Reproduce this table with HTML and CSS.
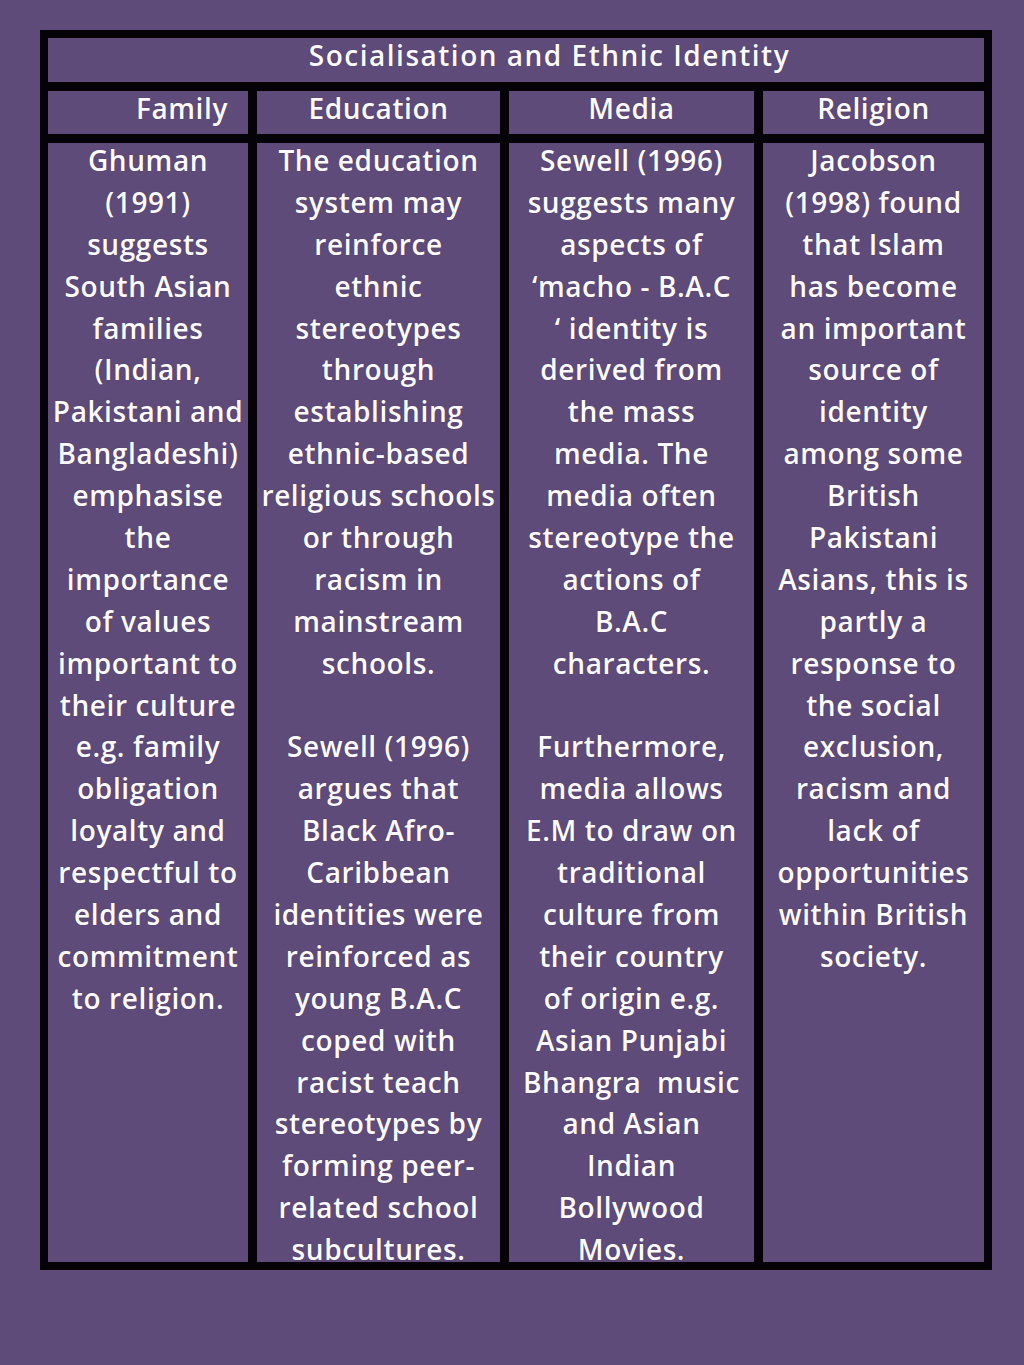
FILE: index.html
```html
<!DOCTYPE html>
<html lang="en">
<head>
<meta charset="utf-8">
<title>Socialisation and Ethnic Identity</title>
<link rel="stylesheet" href="styles.css">
</head>
<body>
<div class="table">
  <div class="title">Socialisation and Ethnic Identity</div>
  <div class="head head-family">Family</div>
  <div class="head">Education</div>
  <div class="head">Media</div>
  <div class="head">Religion</div>
  <div class="cell">
    <span>Ghuman</span><span>(1991)</span><span>suggests</span><span>South Asian</span><span>families</span><span>(Indian,</span><span>Pakistani and</span><span>Bangladeshi)</span><span>emphasise</span><span>the</span><span>importance</span><span>of values</span><span>important to</span><span>their culture</span><span>e.g. family</span><span>obligation</span><span>loyalty and</span><span>respectful to</span><span>elders and</span><span>commitment</span><span>to religion.</span>
  </div>
  <div class="cell">
    <span>The education</span><span>system may</span><span>reinforce</span><span>ethnic</span><span>stereotypes</span><span>through</span><span>establishing</span><span>ethnic-based</span><span>religious schools</span><span>or through</span><span>racism in</span><span>mainstream</span><span>schools.</span><span>&nbsp;</span><span>Sewell (1996)</span><span>argues that</span><span>Black Afro-</span><span>Caribbean</span><span>identities were</span><span>reinforced as</span><span>young B.A.C</span><span>coped with</span><span>racist teach</span><span>stereotypes by</span><span>forming peer-</span><span>related school</span><span>subcultures.</span>
  </div>
  <div class="cell">
    <span>Sewell (1996)</span><span>suggests many</span><span>aspects of</span><span>‘macho - B.A.C</span><span>‘ identity is</span><span>derived from</span><span>the mass</span><span>media. The</span><span>media often</span><span>stereotype the</span><span>actions of</span><span>B.A.C</span><span>characters.</span><span>&nbsp;</span><span>Furthermore,</span><span>media allows</span><span>E.M to draw on</span><span>traditional</span><span>culture from</span><span>their country</span><span>of origin e.g.</span><span>Asian Punjabi</span><span>Bhangra&nbsp; music</span><span>and Asian</span><span>Indian</span><span>Bollywood</span><span>Movies.</span>
  </div>
  <div class="cell">
    <span>Jacobson</span><span>(1998) found</span><span>that Islam</span><span>has become</span><span>an important</span><span>source of</span><span>identity</span><span>among some</span><span>British</span><span>Pakistani</span><span>Asians, this is</span><span>partly a</span><span>response to</span><span>the social</span><span>exclusion,</span><span>racism and</span><span>lack of</span><span>opportunities</span><span>within British</span><span>society.</span>
  </div>
</div>
</body>
</html>
```

FILE: styles.css
```css
html, body {
  margin: 0;
  padding: 0;
  background: #5e4b7a;
}
body {
  width: 1024px;
  height: 1365px;
  overflow: hidden;
  padding-top: 30px;
  padding-left: 40px;
  box-sizing: border-box;
  font-family: "Open Sans", "DejaVu Sans", sans-serif;
  font-weight: 600;
  color: #fdfbff;
}
.table {
  width: 952px;
  box-sizing: border-box;
  background: #050308;
  padding: 8px 9px 8px 8px;
  display: grid;
  grid-template-columns: 200px 243px 245px 221px;
  grid-template-rows: 44px 43px 1119px;
  column-gap: 9px;
  row-gap: 9px;
}
.title, .head, .cell {
  background: #5e4b7a;
  text-align: center;
  font-size: 28px;
  letter-spacing: 0.6px;
  white-space: nowrap;
  text-shadow: 0 0 1px rgba(40, 30, 60, 0.6);
}
.title {
  grid-column: 1 / -1;
  padding-left: 67px;
  line-height: 34px;
  letter-spacing: 1.5px;
}
.head {
  line-height: 34px;
}
.head-family {
  text-align: right;
  padding-right: 20px;
}
.cell {
  padding-top: 4px;
  box-sizing: border-box;
}
.cell span {
  display: block;
  height: 41.9px;
  line-height: 26px;
}
```
